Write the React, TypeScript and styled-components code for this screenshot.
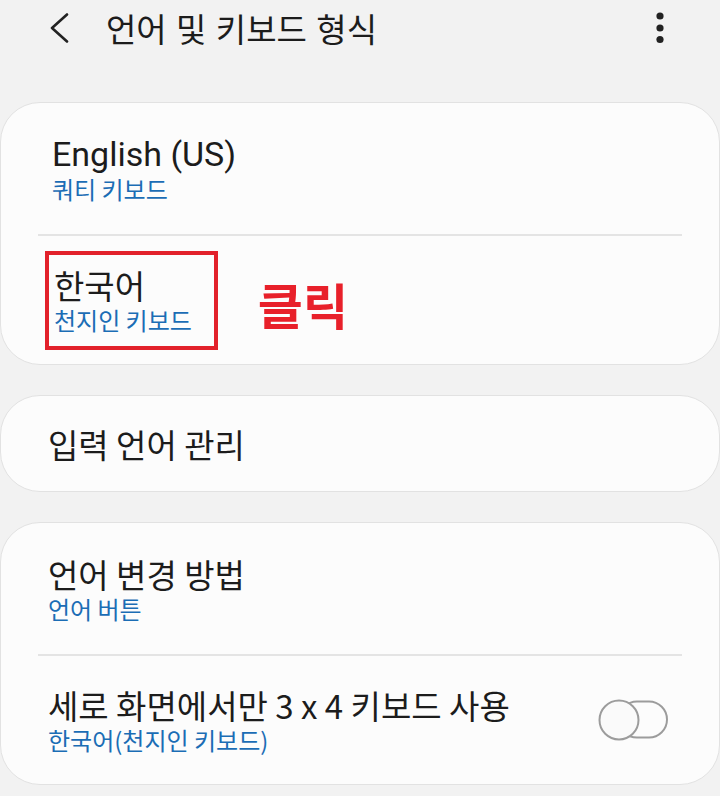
import React from 'react'
import styled, { createGlobalStyle } from 'styled-components'

const GlobalStyle = createGlobalStyle`
  html, body {
    margin: 0;
    padding: 0;
    background: #f2f2f2;
  }
  body {
    font-family: Roboto, "Noto Sans CJK KR", sans-serif;
    color: #1c1c1c;
  }
`

const Screen = styled.div`
  width: 720px;
  height: 796px;
  overflow: hidden;
  background: #f2f2f2;
`

const Header = styled.header`
  height: 56px;
  display: flex;
  align-items: center;
  padding: 0 48px 0 47px;
`

const Back = styled.svg`
  width: 24px;
  height: 30px;
  flex: none;
`

const Title = styled.h1`
  margin: 0 0 0 35px;
  flex: 1;
  font-family: "Noto Sans CJK KR", sans-serif;
  font-weight: 400;
  font-size: 33px;
  word-spacing: 2px;
  color: #1c1c1c;
`

const More = styled.svg`
  width: 24px;
  height: 34px;
  flex: none;
`

const List = styled.main`
  display: flex;
  flex-direction: column;
  gap: 30px;
  padding-top: 46px;
`

const Card = styled.section`
  background: #fcfcfc;
  border: 1px solid #e2e2e2;
  border-radius: 40px;
  overflow: hidden;
`

const Row = styled.div<{ $height: number; $inset?: number }>`
  height: ${p => p.$height}px;
  display: flex;
  align-items: center;
  padding: 0 50px 0 ${p => p.$inset ?? 47}px;
`

const Divider = styled.hr`
  margin: 0 37px;
  border: 0;
  height: 2px;
  background: #e4e4e4;
`

const TextBlock = styled.div`
  flex: 1;
  display: flex;
  flex-direction: column;
`

const Label = styled.div<{ $latin?: boolean }>`
  font-family: ${p => (p.$latin ? 'Roboto, "Noto Sans CJK KR", sans-serif' : '"Noto Sans CJK KR", sans-serif')};
  font-size: ${p => (p.$latin ? 34 : 33)}px;
  line-height: 40px;
  color: #1c1c1c;
  white-space: nowrap;
`

const Sub = styled.div`
  font-family: "Noto Sans CJK KR", sans-serif;
  font-size: 24px;
  line-height: 30px;
  color: #1b6db5;
  white-space: nowrap;
`

const Marked = styled.div`
  border: 4px solid #e2212b;
  padding: 10px 22px 11px 5px;
  display: flex;
  flex-direction: column;
`

const Callout = styled.div`
  margin-left: 40px;
  margin-top: 6px;
  font-family: "Noto Sans CJK KR", sans-serif;
  font-weight: 700;
  font-size: 49px;
  color: #e8202a;
`

const SwitchIcon = styled.svg`
  width: 72px;
  height: 44px;
  flex: none;
`

const Toggle = () => (
  <SwitchIcon viewBox="0 0 72 44">
    <rect x="22" y="3.5" width="48" height="36" rx="18" fill="none" stroke="#9c9c9c" strokeWidth="2" />
    <circle cx="22" cy="22" r="19.5" fill="#fafafa" stroke="#9c9c9c" strokeWidth="2" />
  </SwitchIcon>
)

const App = (): JSX.Element => (
  <Screen>
    <GlobalStyle />
    <Header>
      <Back viewBox="0 0 24 30">
        <polyline points="20,1.5 5,15 20,28.5" fill="none" stroke="#222" strokeWidth="2.6" strokeLinecap="round" strokeLinejoin="round" />
      </Back>
      <Title>언어 및 키보드 형식</Title>
      <More viewBox="0 0 24 34">
        <circle cx="12" cy="5" r="3.6" fill="#222" />
        <circle cx="12" cy="17" r="3.6" fill="#222" />
        <circle cx="12" cy="28.5" r="3.6" fill="#222" />
      </More>
    </Header>

    <List>
      <Card>
        <Row $height={131} $inset={51}>
          <TextBlock>
            <Label $latin>English (US)</Label>
            <Sub>쿼티 키보드</Sub>
          </TextBlock>
        </Row>
        <Divider />
        <Row $height={128} $inset={44}>
          <Marked>
            <Label>한국어</Label>
            <Sub>천지인 키보드</Sub>
          </Marked>
          <Callout>클릭</Callout>
        </Row>
      </Card>

      <Card>
        <Row $height={95}>
          <TextBlock>
            <Label>입력 언어 관리</Label>
          </TextBlock>
        </Row>
      </Card>

      <Card>
        <Row $height={131}>
          <TextBlock>
            <Label>언어 변경 방법</Label>
            <Sub>언어 버튼</Sub>
          </TextBlock>
        </Row>
        <Divider />
        <Row $height={128}>
          <TextBlock>
            <Label>세로 화면에서만 3 x 4 키보드 사용</Label>
            <Sub>한국어(천지인 키보드)</Sub>
          </TextBlock>
          <Toggle />
        </Row>
      </Card>
    </List>
  </Screen>
)

export default App
